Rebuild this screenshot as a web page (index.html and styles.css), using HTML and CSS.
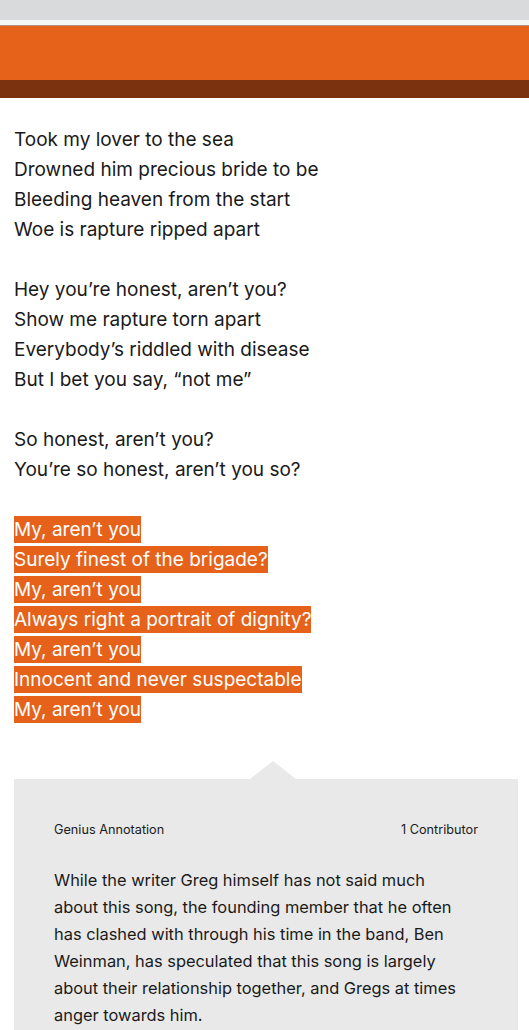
FILE: index.html
```html
<!DOCTYPE html>
<html>
<head>
<meta charset="utf-8">
<link rel="stylesheet" href="styles.css">
</head>
<body>
<div class="topbar"></div>
<div class="strip"></div>
<div class="header"></div>
<div class="subheader"></div>
<main class="lyrics">
  <p class="stanza">Took my lover to the sea<br>Drowned him precious bride to be<br>Bleeding heaven from the start<br>Woe is rapture ripped apart</p>
  <p class="stanza">Hey you’re honest, aren’t you?<br>Show me rapture torn apart<br>Everybody’s riddled with disease<br>But I bet you say, “not me”</p>
  <p class="stanza">So honest, aren’t you?<br>You’re so honest, aren’t you so?</p>
  <p class="stanza hl">
    <span class="mark">My, aren’t you</span><br>
    <span class="mark">Surely finest of the brigade?</span><br>
    <span class="mark">My, aren’t you</span><br>
    <span class="mark">Always right a portrait of dignity?</span><br>
    <span class="mark">My, aren’t you</span><br>
    <span class="mark">Innocent and never suspectable</span><br>
    <span class="mark">My, aren’t you</span>
  </p>
</main>
<section class="annotation">
  <div class="ann-head">
    <span>Genius Annotation</span>
    <span>1 Contributor</span>
  </div>
  <p class="ann-body">While the writer Greg himself has not said much<br>about this song, the founding member that he often<br>has clashed with through his time in the band, Ben<br>Weinman, has speculated that this song is largely<br>about their relationship together, and Gregs at times<br>anger towards him.</p>
</section>
</body>
</html>
```
FILE: styles.css
```css
html, body {
  margin: 0;
  padding: 0;
  background: #ffffff;
  font-family: "Inter", "Noto Sans", sans-serif;
  color: #1a1a1a;
}
.topbar {
  height: 20px;
  background: #d9dadb;
}
.strip {
  height: 5px;
  background: #f3f4f4;
  border-bottom: 1px solid #b3907f;
}
.header {
  height: 54px;
  background: #e6621a;
}
.subheader {
  height: 18px;
  background: #7a330e;
}
.lyrics {
  padding: 27px 14px 0 14px;
  font-size: 19px;
  line-height: 30px;
}
.stanza {
  margin: 0 0 30px 0;
}
.stanza.hl {
  margin-bottom: 0;
}
.mark {
  display: inline-block;
  background: #e6621a;
  color: #ffffff;
  line-height: 27px;
  vertical-align: top;
  margin-top: 1px;
}
.annotation {
  position: relative;
  margin: 54px 11px 0 14px;
  background: #e9e9e9;
  padding: 41px 40px 20px 40px;
}
.annotation::before {
  content: "";
  position: absolute;
  top: -18px;
  left: 236px;
  border-left: 23px solid transparent;
  border-right: 23px solid transparent;
  border-bottom: 18px solid #e9e9e9;
}
.ann-head {
  display: flex;
  justify-content: space-between;
  font-size: 12.7px;
  line-height: 20px;
  color: #1a1a1a;
}
.ann-body {
  margin: 27px 0 0 0;
  font-size: 16.4px;
  line-height: 27px;
}
```
